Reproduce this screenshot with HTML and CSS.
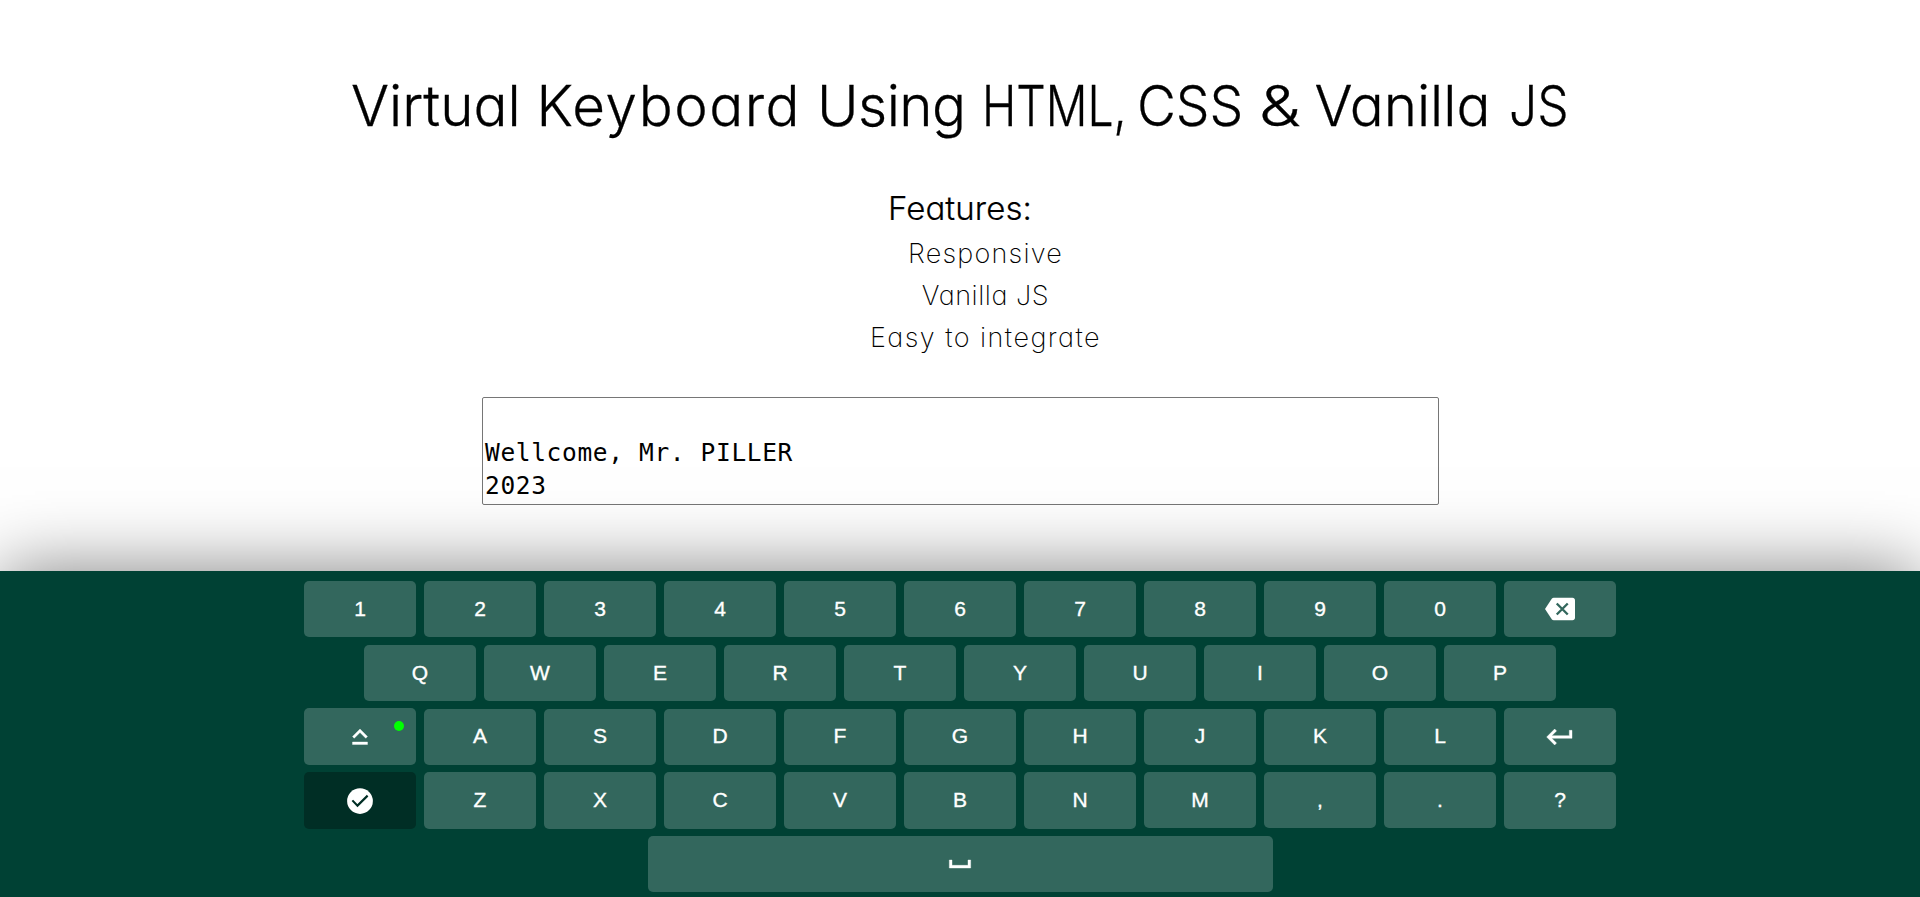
FILE: index.html
```html
<!DOCTYPE html>
<html lang="en">
<head>
<meta charset="utf-8">
<title>Virtual Keyboard</title>
<link rel="stylesheet" href="styles.css">
</head>
<body>
<main class="page">
  <h1 class="title">Virtual <span class="w-keyboard">Keyboard</span> <span class="w-using">Using</span> <span class="w-html">HTML,</span> <span class="w-css">CSS</span> <span class="w-amp">&amp;</span> Vanilla <span class="w-js">JS</span></h1>
  <h2 class="subtitle">Features:</h2>
  <ul class="features">
    <li class="f1">Responsive</li>
    <li class="f2">Vanilla JS</li>
    <li class="f3">Easy to integrate</li>
  </ul>
  <div class="field">
<span>Wellcome, Mr. PILLER</span>
<span>2023</span></div>
</main>
<div class="keyboard">
  <div class="row"><button class="key">1</button><button class="key">2</button><button class="key">3</button><button class="key">4</button><button class="key">5</button><button class="key">6</button><button class="key">7</button><button class="key">8</button><button class="key">9</button><button class="key">0</button><button class="key"><svg class="icon" viewBox="0 0 24 24"><path d="M22 3H7c-.69 0-1.230.35-1.590.88L0 12l5.410 8.110c.36.53.9.89 1.590.89h15c1.100 0 2-.9 2-2V5c0-1.100-.9-2-2-2z"/><path class="cut" d="M9.400 7.600l8.800 8.800M18.200 7.600l-8.800 8.800"/></svg></button></div>
  <div class="row"><button class="key">Q</button><button class="key">W</button><button class="key">E</button><button class="key">R</button><button class="key">T</button><button class="key">Y</button><button class="key">U</button><button class="key">I</button><button class="key">O</button><button class="key">P</button></div>
  <div class="row row-home"><button class="key tall caps"><svg class="icon heavy" viewBox="0 0 24 24"><path d="M12 8.410L16.590 13 18 11.590l-6-6-6 6L7.410 13 12 8.410zM6 18h12v-2H6v2z"/></svg></button><button class="key">A</button><button class="key">S</button><button class="key">D</button><button class="key">F</button><button class="key">G</button><button class="key">H</button><button class="key">J</button><button class="key">K</button><button class="key tall letter">L</button><button class="key tall"><svg class="icon heavy wide" viewBox="0 0 24 24"><path d="M19 7v4H5.830l3.580-3.590L8 6l-6 6 6 6 1.410-1.410L5.830 13H21V7z"/></svg></button></div>
  <div class="row row-bottom"><button class="key tall done"><svg class="icon" viewBox="0 0 24 24"><circle cx="12" cy="12" r="10.300"/><path class="cut dark" d="M5.900 11.500L10 15.700 18.100 7.700"/></svg></button><button class="key tall">Z</button><button class="key tall">X</button><button class="key tall">C</button><button class="key tall">V</button><button class="key tall">B</button><button class="key tall">N</button><button class="key">M</button><button class="key">,</button><button class="key">.</button><button class="key tall">?</button></div>
  <div class="row"><button class="key space"><svg class="icon heavy wide" viewBox="0 0 24 24"><path d="M18 9v4H6V9H4v6h16V9z"/></svg></button></div>
</div>
</body>
</html>
```
FILE: styles.css
```css
* { box-sizing: border-box; }
body {
  margin: 0;
  height: 897px;
  overflow: hidden;
  display: flex;
  flex-direction: column;
  background: #fff;
  color: #000;
}
.page {
  flex: none;
  height: 571px;
  padding-top: 61px;
  display: flex;
  flex-direction: column;
  align-items: center;
  font-family: Inter, "Open Sans", sans-serif;
  font-feature-settings: "cv11";
}
.title {
  margin: 0;
  height: 90px;
  line-height: 90px;
  font-size: 56.500px;
  font-weight: 300;
  -webkit-text-stroke: .3px #000;
  white-space: nowrap;
}
.title span { display: inline-block; transform-origin: left; }
.w-keyboard { letter-spacing: 1.500px; }
.w-using { letter-spacing: -.5px; }
.w-html { transform: scaleX(.82); margin-right: -37px; font-weight: 350; }
.w-css { transform: scaleX(.945); margin-right: -6px; }
.w-amp { transform: scaleX(1.180); margin-right: 4px; }
.w-js { transform: scaleX(.88); margin: 0 -8px 0 3px; }
.subtitle {
  margin: 34px 0 0;
  height: 46px;
  line-height: 46px;
  font-size: 33px;
  font-weight: 300;
  letter-spacing: .1px;
  -webkit-text-stroke: .2px #000;
}
.features {
  list-style: none;
  margin: 1px 0 0;
  padding: 1px 0 0 51px;
  text-align: center;
  font-size: 27px;
  font-weight: 200;
  line-height: 42px;
}
.f1 { letter-spacing: 1.200px; }
.f2 { letter-spacing: .55px; }
.f3 { letter-spacing: 1.450px; }
.field {
  width: 957px;
  height: 108px;
  margin: 38px 0 0 1px;
  padding: 5px 2px;
  border: 1px solid #767676;
  border-radius: 2px;
  font-family: "DejaVu Sans Mono", monospace;
  font-size: 24.500px;
  letter-spacing: 0.650px;
  line-height: 33px;
  white-space: pre;
}
.keyboard {
  position: relative;
  flex: 1;
  padding-top: 10px;
  background: #004134;
  box-shadow: 0 0 70px rgba(0, 0, 0, .5);
}
.row {
  display: flex;
  justify-content: center;
  gap: 8px;
  height: 64px;
}
.row-bottom { height: 63px; margin-top: -1px; }
.key {
  position: relative;
  flex: none;
  display: flex;
  align-items: center;
  justify-content: center;
  width: 112px;
  height: 56px;
  padding: 0;
  border: 0;
  border-radius: 5px;
  background: #33675d;
  color: #fff;
  font: 500 21px "Liberation Sans", Arial, sans-serif;
  -webkit-text-stroke: .35px #fff;
}
.tall { height: 57px; }
.row-home .key, .row-bottom .key { padding-bottom: 2px; }
.row-bottom .key:not(.tall) { padding-bottom: 0; }
.row-home .tall { margin-top: -1px; padding-bottom: 0; }
.row-home .letter { padding-bottom: 2px; }
.row-bottom .done { padding: 1px 0 0; }
.space { width: 625px; margin-top: 1px; }
.done { background: #002e25; }
.caps::after {
  content: "";
  position: absolute;
  top: 13px;
  right: 12px;
  width: 10px;
  height: 10px;
  border-radius: 50%;
  background: #0f0;
}
.icon {
  width: 30px;
  height: 30px;
  fill: #fff;
  overflow: visible;
}
.heavy { stroke: #fff; stroke-width: .3; }
.wide { width: 32px; height: 32px; }
.cut { fill: none; stroke: #33675d; stroke-width: 1.900; }
.dark { stroke: #002e25; stroke-width: 1.700; }
```
